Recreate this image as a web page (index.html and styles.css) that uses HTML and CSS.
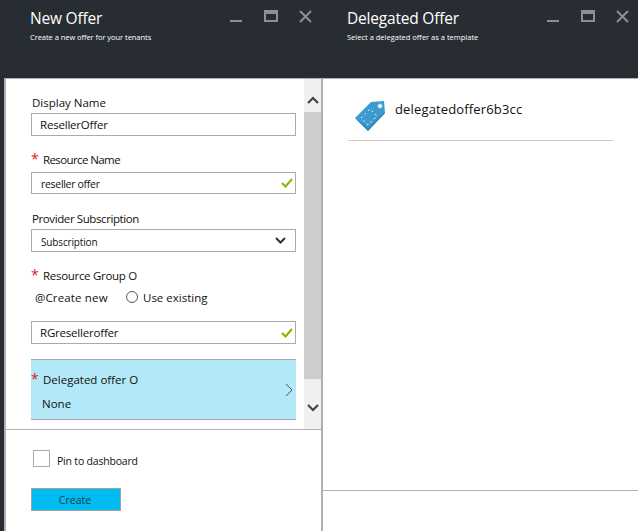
FILE: index.html
```html
<!DOCTYPE html>
<html lang="en">
<head>
  <meta charset="UTF-8">
  <title>New Offer</title>
  <link rel="stylesheet" href="styles.css">
</head>
<body>

  <div class="desk">
    <div class="strip"></div>

    <section class="blade blade-form">
      <header class="blade-head">
        <div class="head-text">
          <h2>New Offer</h2>
          <p>Create a new offer for your tenants</p>
        </div>
        <div class="head-icons">
          <svg width="13" height="13" viewBox="0 0 13 13"><rect x="0" y="10" width="12" height="2" fill="#8c9093"/></svg>
          <svg width="14" height="13" viewBox="0 0 14 13"><path d="M0 0h14v12H0z M2 4v6h10V4z" fill="#8c9093" fill-rule="evenodd"/></svg>
          <svg width="13" height="13" viewBox="0 0 13 13"><path d="M1 1l11 11M12 1L1 12" stroke="#8c9093" stroke-width="2" fill="none"/></svg>
        </div>
      </header>

      <div class="blade-body">
        <form class="form">
          <label class="label label-first">Display Name</label>
          <div class="input input-name">ResellerOffer</div>

          <label class="label label-req"><span class="star">*</span>Resource Name</label>
          <div class="input input-small"><span class="nudge">reseller offer</span>
            <svg class="check" width="12" height="10" viewBox="0 0 12 10"><path d="M1 5l3.5 3.5L11 1" stroke="#7fba00" stroke-width="2" fill="none"/></svg>
          </div>

          <label class="label label-sub">Provider Subscription</label>
          <div class="input input-select"><span class="nudge">Subscription</span>
            <svg class="chev" width="11" height="7" viewBox="0 0 11 7"><path d="M1 1l4.500 4.500L10 1" stroke="#333" stroke-width="2" fill="none"/></svg>
          </div>

          <label class="label label-req label-group"><span class="star">*</span>Resource Group O</label>
          <div class="radios">
            <span class="radio-first">@Create new</span>
            <span class="radio-dot"></span>
            <span>Use existing</span>
          </div>
          <div class="input input-rg">RGreselleroffer
            <svg class="check" width="12" height="10" viewBox="0 0 12 10"><path d="M1 5l3.5 3.500L11 1" stroke="#7fba00" stroke-width="2" fill="none"/></svg>
          </div>

          <div class="picker">
            <div class="picker-text">
              <div class="picker-title"><span class="star">*</span>Delegated offer O</div>
              <div class="picker-value">None</div>
            </div>
            <svg width="8" height="14" viewBox="0 0 8 14"><path d="M1 1l6 6-6 6" stroke="#555" stroke-width="1" fill="none"/></svg>
          </div>
        </form>

        <div class="scrollbar">
          <div class="scroll-btn">
            <svg width="12" height="8" viewBox="0 0 12 8"><path d="M1 7l5-5 5 5" stroke="#444" stroke-width="2.200" fill="none"/></svg>
          </div>
          <div class="scroll-thumb"></div>
          <div class="scroll-btn scroll-btn-down">
            <svg width="12" height="8" viewBox="0 0 12 8"><path d="M1 1l5 5 5-5" stroke="#444" stroke-width="2.200" fill="none"/></svg>
          </div>
        </div>
      </div>

      <footer class="blade-foot">
        <div class="pin">
          <span class="checkbox"></span>
          <span class="pin-text">Pin to dashboard</span>
        </div>
        <button type="button" class="create">Create</button>
      </footer>
    </section>

    <section class="blade blade-list">
      <header class="blade-head">
        <div class="head-text">
          <h2>Delegated Offer</h2>
          <p>Select a delegated offer as a template</p>
        </div>
        <div class="head-icons">
          <svg width="13" height="13" viewBox="0 0 13 13"><rect x="0" y="10" width="12" height="2" fill="#8c9093"/></svg>
          <svg width="14" height="13" viewBox="0 0 14 13"><path d="M0 0h14v12H0z M2 4v6h10V4z" fill="#8c9093" fill-rule="evenodd"/></svg>
          <svg width="13" height="13" viewBox="0 0 13 13"><path d="M1 1l11 11M12 1L1 12" stroke="#8c9093" stroke-width="2" fill="none"/></svg>
        </div>
      </header>

      <div class="list">
        <div class="offer">
          <svg width="32" height="34" viewBox="0 0 32 34">
            <path d="M1 19L17 3l13-1 1 12-17 18z" fill="#3c9bcf"/>
            <path d="M1 19l13 13 17-18-1-1-16 16z" fill="#2f86b8"/>
            <circle cx="26" cy="7" r="2" fill="#fff" stroke="#c9d6de"/>
            <path d="M7 19L16 10l7 7-9 9z" fill="none" stroke="#eaf5fb" stroke-width="1" stroke-dasharray="2 3"/>
          </svg>
          <span class="offer-name">delegatedoffer6b3cc</span>
        </div>
      </div>
      <div class="list-foot"></div>
    </section>
  </div>

</body>
</html>
```

FILE: styles.css
```css
html, body {
  margin: 0;
  padding: 0;
}
body {
  font-family: "Open Sans", Arial, sans-serif;
  font-size: 12px;
  color: #111;
  background: #fff;
  overflow: hidden;
}
.desk {
  display: flex;
  width: 638px;
  height: 531px;
  overflow: hidden;
}
.strip {
  width: 4px;
  background: #282d33;
}
.blade {
  display: flex;
  flex-direction: column;
  border-left: 2px solid #b0b0b0;
  box-sizing: border-box;
}
.blade-form {
  width: 317px;
}
.blade-list {
  width: 317px;
}
.blade-head {
  display: flex;
  justify-content: space-between;
  height: 78px;
  background: #282d33;
  border-bottom: 1px solid #b0b0b0;
  margin-left: -2px;
  flex-shrink: 0;
}
.head-text {
  padding: 7px 0 0 26px;
  color: #fff;
}
.head-text h2 {
  margin: 0;
  font-size: 15.5px;
  line-height: 22px;
  font-weight: 400;
  letter-spacing: -0.2px;
}
.head-text p {
  margin: 3px 0 0;
  font-size: 7.500px;
  line-height: 11px;
}
.blade-form .head-text p {
  letter-spacing: -0.05px;
}
.head-icons {
  display: flex;
  gap: 21px;
  padding: 10px 9px 0 0;
}
.blade-body {
  display: flex;
  height: 350px;
  flex-shrink: 0;
}
.form {
  width: 298px;
  box-sizing: border-box;
  padding-left: 25px;
}
.label {
  display: block;
  font-size: 11.500px;
  line-height: 16px;
  white-space: nowrap;
}
.label-first {
  margin: 16px 0 2px 1px;
}
.label-req {
  margin: 16px 0 4px 0;
  letter-spacing: -0.6px;
}
.label-sub {
  margin: 17px 0 2px 1px;
  letter-spacing: -0.4px;
}
.label-group {
  margin: 16px 0 0;
  letter-spacing: -0.3px;
}
.star {
  display: inline-block;
  width: 12px;
  color: #e81123;
  font-size: 14px;
  line-height: 10px;
}
.input {
  display: flex;
  align-items: center;
  justify-content: space-between;
  width: 265px;
  height: 23px;
  box-sizing: border-box;
  border: 1px solid #ababab;
  padding: 0 2px 0 9px;
  font-size: 11.500px;
}
.input-name {
  padding-left: 8px;
  letter-spacing: -0.2px;
}
.input-small {
  font-size: 10.500px;
  height: 22px;
  letter-spacing: -0.3px;
}
.input-select {
  font-size: 10px;
  padding-right: 9px;
  letter-spacing: -0.15px;
}
.input-rg {
  margin-top: 16px;
  padding-left: 8px;
  letter-spacing: -0.2px;
}
.nudge {
  padding-top: 2px;
}
.radios {
  display: flex;
  align-items: center;
  height: 16px;
  margin-top: 5px;
  font-size: 11.500px;
  white-space: nowrap;
}
.radio-first {
  margin-left: 4px;
  width: 91px;
  letter-spacing: 0.15px;
}
.radio-dot {
  width: 10px;
  height: 10px;
  margin-right: 5px;
  border: 1px solid #555;
  border-radius: 50%;
}
.picker {
  display: flex;
  align-items: center;
  justify-content: space-between;
  width: 265px;
  height: 61px;
  box-sizing: border-box;
  margin-top: 15px;
  padding-right: 3px;
  background: #b3e8f8;
  border-top: 1px solid #a9a9a9;
  border-bottom: 1px solid #a9a9a9;
  font-size: 11.500px;
}
.picker-title {
  margin-top: 4px;
  white-space: nowrap;
}
.picker-value {
  margin: 9px 0 0 11px;
}
.scrollbar {
  display: flex;
  flex-direction: column;
  width: 17px;
  background: #f0f0f0;
}
.scroll-btn {
  display: flex;
  align-items: center;
  justify-content: center;
  box-sizing: border-box;
  height: 33px;
  padding-top: 9px;
  flex-shrink: 0;
}
.scroll-btn-down {
  height: 50px;
  padding-top: 8px;
}
.scroll-thumb {
  flex: 1;
  background: #cdcdcd;
}
.blade-foot {
  flex: 1;
  border-top: 1px solid #b0b0b0;
  padding: 20px 0 0 25px;
}
.pin {
  display: flex;
  align-items: flex-start;
  gap: 7px;
  height: 17px;
  padding-left: 2px;
  font-size: 10.500px;
  white-space: nowrap;
}
.pin-text {
  margin-top: 3px;
  line-height: 16px;
  letter-spacing: -0.2px;
}
.checkbox {
  width: 15px;
  height: 15px;
  border: 1px solid #ababab;
}
.create {
  display: block;
  width: 90px;
  height: 23px;
  margin-top: 21px;
  padding: 1px 2px 0 0;
  background: #00bcf2;
  border: 1px solid #a0a0a0;
  color: #1a3a40;
  font-family: inherit;
  font-size: 10.500px;
}
.list {
  height: 411px;
  flex-shrink: 0;
}
.offer {
  display: flex;
  align-items: flex-start;
  gap: 9px;
  width: 265px;
  height: 62px;
  box-sizing: border-box;
  margin-left: 25px;
  padding: 20px 0 0 6px;
  border-bottom: 1px solid #ccc;
  font-size: 13px;
  line-height: 20px;
}
.offer-name {
  letter-spacing: 0.15px;
}
.list-foot {
  flex: 1;
  border-top: 1px solid #b0b0b0;
}
```
